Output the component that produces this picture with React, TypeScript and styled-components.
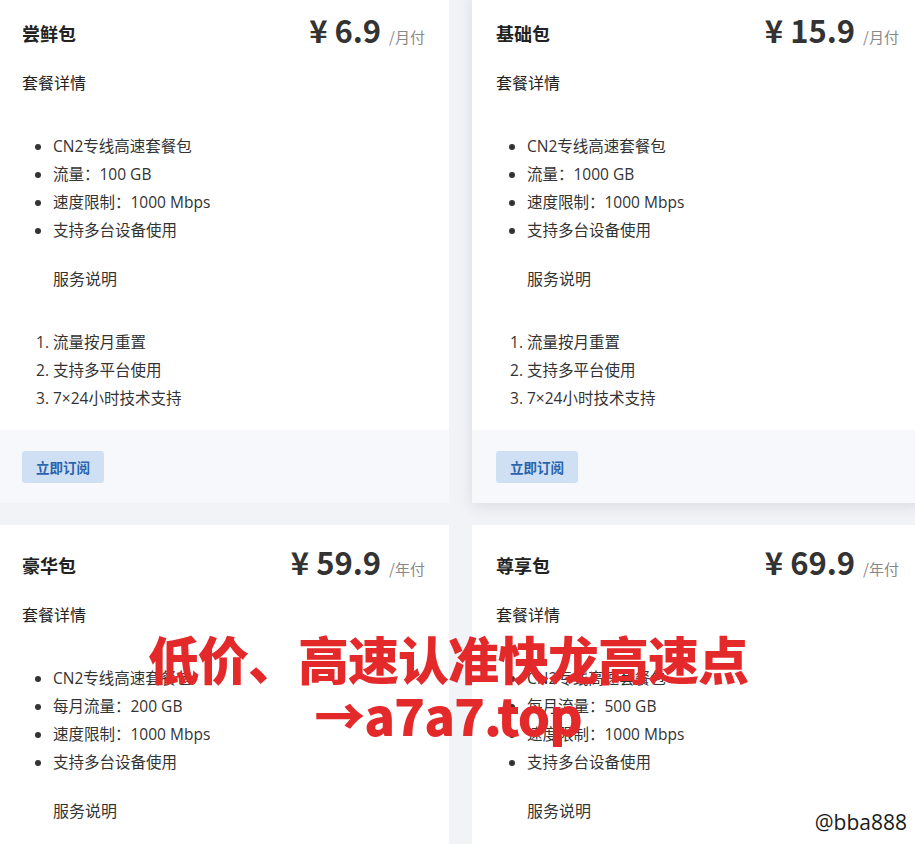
import React from 'react';
import styled, {createGlobalStyle} from 'styled-components';

const plans = [
  {name: '尝鲜包', price: '6.9', unit: '/月付', traffic: '流量：100 GB', raised: false},
  {name: '基础包', price: '15.9', unit: '/月付', traffic: '流量：1000 GB', raised: true},
  {name: '豪华包', price: '59.9', unit: '/年付', traffic: '每月流量：200 GB', raised: false},
  {name: '尊享包', price: '69.9', unit: '/年付', traffic: '每月流量：500 GB', raised: false},
];

export default () => {
  return (<Page>
    <Global/>
    <Grid>
      {plans.map((p) => (
        <Card key={p.name} raised={p.raised}>
          <Body>
            <Header>
              <Title>{p.name}</Title>
              <Price>¥ {p.price}<Unit>{p.unit}</Unit></Price>
            </Header>
            <Section>套餐详情</Section>
            <Bullets>
              <li>CN2专线高速套餐包</li>
              <li>{p.traffic}</li>
              <li>速度限制：1000 Mbps</li>
              <li>支持多台设备使用</li>
            </Bullets>
            <Note>服务说明</Note>
            <Numbers>
              <li>流量按月重置</li>
              <li>支持多平台使用</li>
              <li>7×24小时技术支持</li>
            </Numbers>
          </Body>
          <Footer>
            <Subscribe>立即订阅</Subscribe>
          </Footer>
        </Card>
      ))}
    </Grid>
    <Promo>
      <div>低价、高速认准快龙高速点</div>
      <div>→a7a7.top</div>
    </Promo>
    <Mark>@bba888</Mark>
  </Page>)
}

const Global = createGlobalStyle`
  html, body {
    margin: 0;
    overflow: hidden;
    background: #f2f3f7;
  }
  body {
    font-family: "Open Sans", "Noto Sans CJK SC", sans-serif;
    color: #333;
  }
`;

const Page = styled.div`
  position: relative;
  width: 915px;
  height: 844px;
  overflow: hidden;
`;

const Grid = styled.div`
  display: grid;
  grid-template-columns: 451px 451px;
  column-gap: 23px;
  row-gap: 22px;
  margin: -7px 0 0 -2px;
`;

const Card = styled.div<{raised?: boolean}>`
  background: #fff;
  display: flex;
  flex-direction: column;
  box-shadow: ${props => props.raised ? '0 3px 14px rgba(40, 50, 80, 0.12)' : 'none'};
  position: relative;
  z-index: ${props => props.raised ? 1 : 0};
`;

const Body = styled.div`
  padding: 24px 24px 18px;
`;

const Header = styled.div`
  display: flex;
  justify-content: space-between;
  align-items: center;
  height: 32px;
`;

const Title = styled.div`
  font-family: "Noto Sans CJK SC", sans-serif;
  font-size: 18px;
  font-weight: 700;
  color: #222;
`;

const Price = styled.div`
  font-family: "Noto Sans CJK SC", sans-serif;
  font-size: 31px;
  font-weight: 700;
  color: #333;
  line-height: 32px;
  white-space: nowrap;
`;

const Unit = styled.span`
  font-size: 15px;
  font-weight: 400;
  color: #888;
  margin-left: 8px;
`;

const Section = styled.div`
  font-family: "Noto Sans CJK SC", sans-serif;
  font-size: 16px;
  line-height: 24px;
  margin-top: 21px;
  color: #222;
`;

const Bullets = styled.ul`
  margin: 38px 0 0;
  padding-left: 31px;
  font-size: 15.5px;
  line-height: 28px;
  li { padding-left: 0; }
`;

const Note = styled.div`
  font-family: "Noto Sans CJK SC", sans-serif;
  font-size: 16px;
  line-height: 24px;
  margin-top: 22px;
  padding-left: 31px;
`;

const Numbers = styled.ol`
  margin: 38px 0 0;
  padding-left: 31px;
  font-size: 15.5px;
  line-height: 28px;
`;

const Footer = styled.div`
  background: #f7f8fb;
  padding: 21px 24px 20px;
`;

const Subscribe = styled.button`
  height: 32px;
  padding: 0 14px;
  border: none;
  border-radius: 3px;
  background: #cfe0f5;
  color: #2a64ad;
  font-family: "Noto Sans CJK SC", sans-serif;
  font-size: 13.5px;
  font-weight: 700;
  cursor: pointer;
`;

const Promo = styled.div`
  position: absolute;
  left: 145px;
  top: 630px;
  width: 606px;
  text-align: center;
  font-family: "Noto Sans CJK SC", sans-serif;
  font-weight: 900;
  font-size: 51px;
  line-height: 56px;
  color: #e4292b;
  letter-spacing: -1px;
  z-index: 5;
`;

const Mark = styled.div`
  position: absolute;
  right: 8px;
  bottom: 8px;
  font-family: "Open Sans", sans-serif;
  font-size: 21px;
  color: #1a1a1a;
  z-index: 5;
`;
